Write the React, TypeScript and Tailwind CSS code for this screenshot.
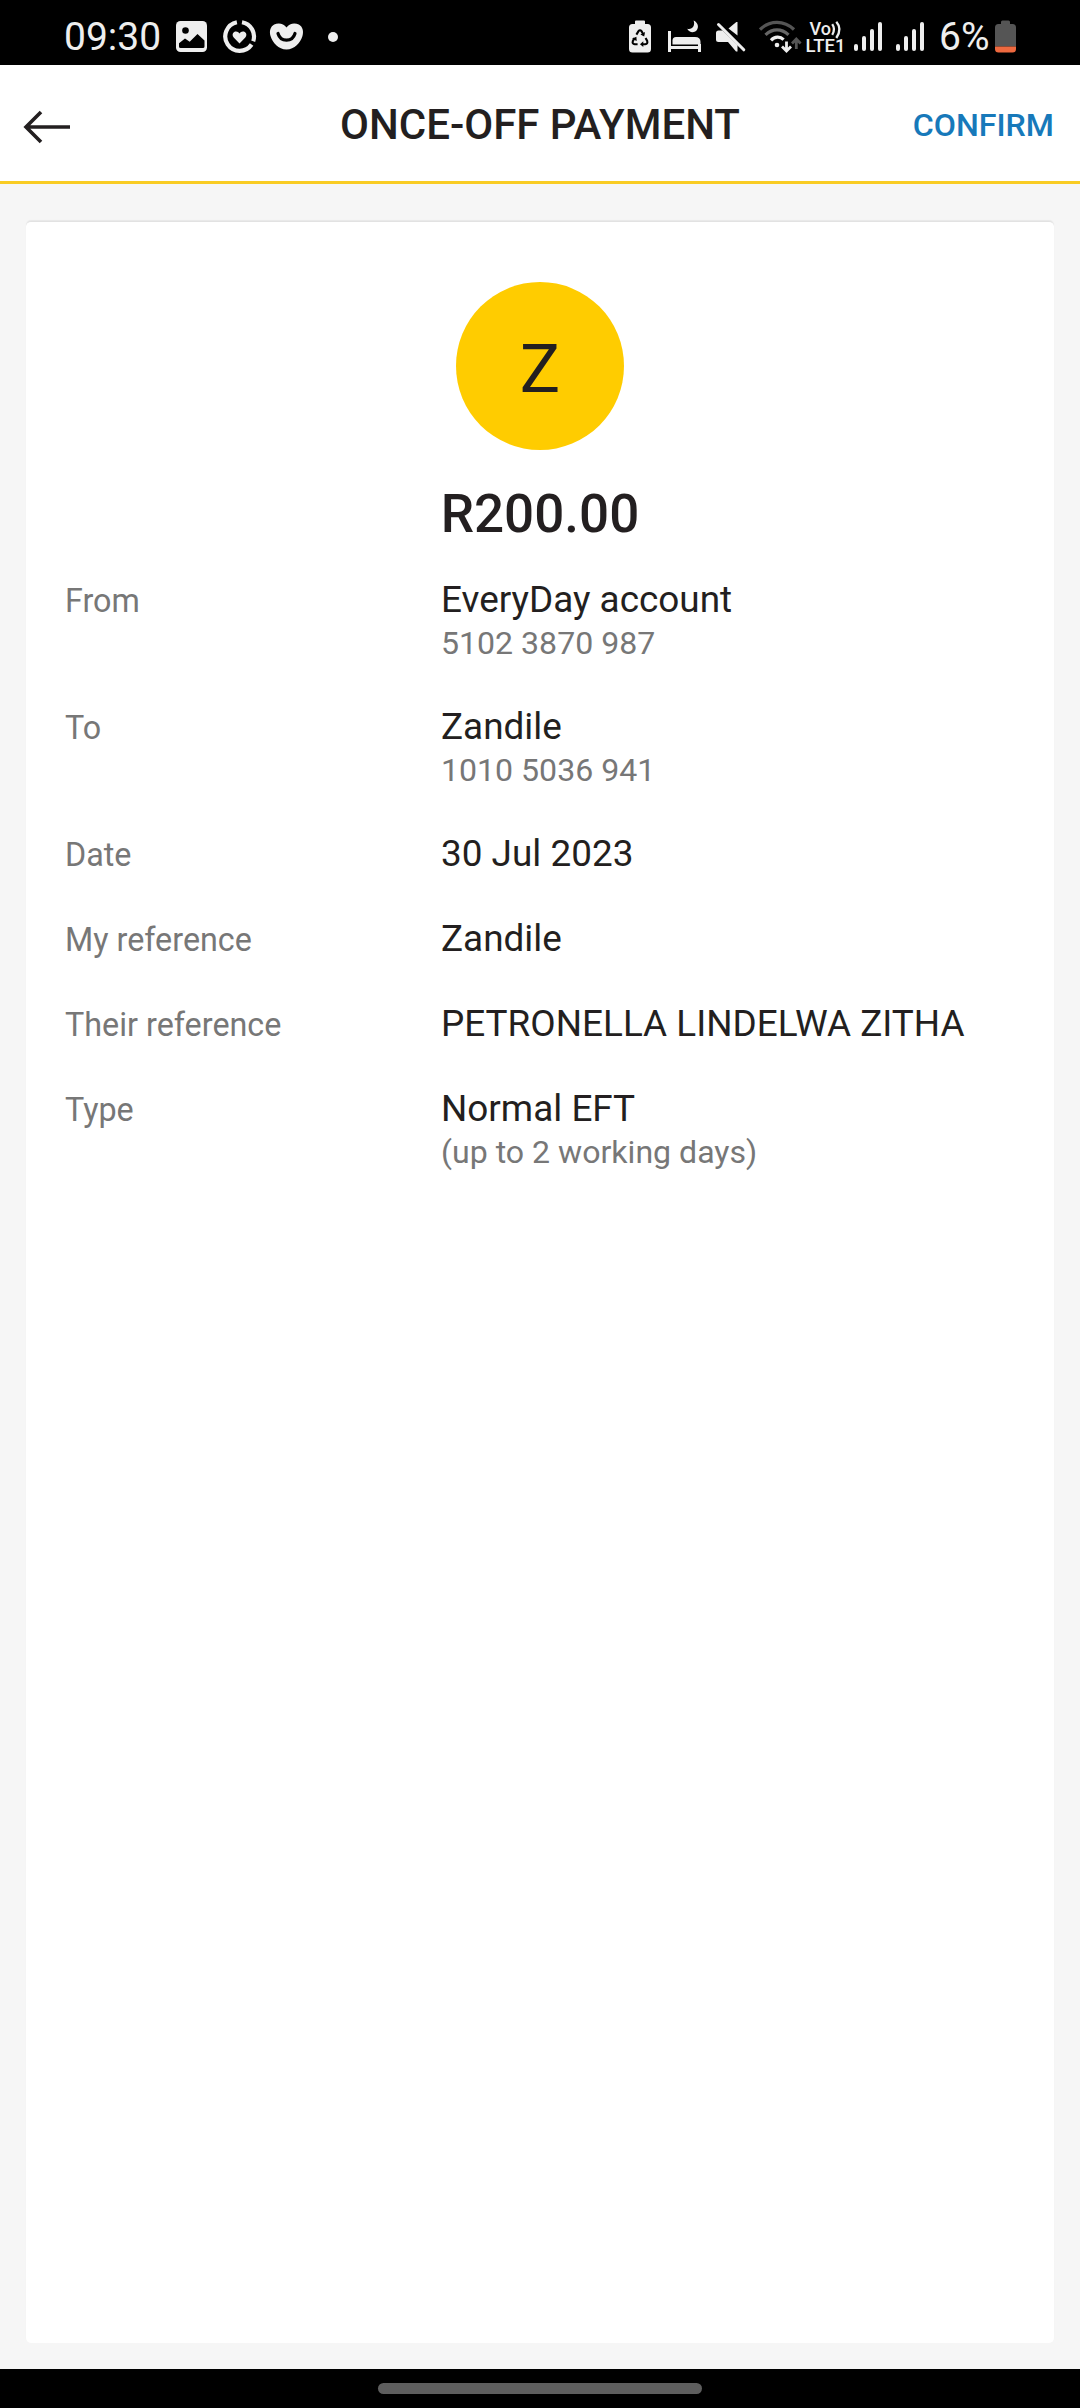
import React from "react";

type Detail = { label: string; value: string; note?: string };

const details: Detail[] = [
  { label: "From", value: "EveryDay account", note: "5102 3870 987" },
  { label: "To", value: "Zandile", note: "1010 5036 941" },
  { label: "Date", value: "30 Jul 2023" },
  { label: "My reference", value: "Zandile" },
  { label: "Their reference", value: "PETRONELLA LINDELWA ZITHA" },
  { label: "Type", value: "Normal EFT", note: "(up to 2 working days)" },
];

function ImageIcon() {
  return (
    <svg className="ml-[16px] h-[33px] w-[33px]" viewBox="0 0 33 33">
      <rect x="1" y="1" width="31" height="31" rx="4.5" fill="#eeeeee" />
      <circle cx="10.5" cy="10.5" r="3.3" fill="#000" />
      <path d="M4 23.3 10 18.5 14.7 21.8 22.5 14 29.5 20.5V26.4Q29.5 28 27.9 28H5.6Q4 28 4 26.4Z" fill="#000" />
    </svg>
  );
}

function HealthRingIcon() {
  return (
    <svg className="ml-[14px] h-[35px] w-[35px]" viewBox="0 0 35 35" fill="none">
      <path d="M14.9 3.3A14.4 14.4 0 1 0 29.6 25.5" stroke="#eeeeee" strokeWidth="4.2" />
      <path d="M20 3.3A14.4 14.4 0 0 1 31.2 22.2" stroke="#eeeeee" strokeWidth="4.2" />
      <path d="M17.5 24.5 11.7 18.4C10 16.5 10.4 14 12.2 13C14 12 16.4 12.6 17.5 14.5C18.6 12.6 21 12 22.8 13C24.6 14 25 16.5 23.3 18.4Z" fill="#eeeeee" />
    </svg>
  );
}

function HeartFaceIcon() {
  return (
    <svg className="ml-[12px] h-[29px] w-[35px]" viewBox="0 0 35 29" fill="none">
      <path d="M17.5 5.5C14.5 1 9 .5 5.2 2.5C1.2 4.7 0 9.5 1.7 14.5C3.5 20.5 9.5 27.5 17.5 27.5S31.5 20.5 33.3 14.5C35 9.5 33.8 4.7 29.8 2.5C26 .5 20.5 1 17.5 5.5Z" fill="#eeeeee" />
      <path d="M9 11.5C10.2 15.5 13.3 18.2 17.5 18.2S24.8 15.5 26 11.5" stroke="#000" strokeWidth="3.2" strokeLinecap="round" />
    </svg>
  );
}

function BatterySaverIcon() {
  return (
    <svg className="h-[33px] w-[24px]" viewBox="0 0 24 33" fill="none">
      <path d="M7 1.5Q7 .5 8 .5H16Q17 .5 17 1.5V4H19.5Q23 4 23 7.5V29Q23 32.5 19.5 32.5H4.5Q1 32.5 1 29V7.5Q1 4 4.5 4H7Z" fill="#eeeeee" />
      <path d="M8.4 14.6 10.5 11.2Q12 9.2 13.5 11.2L15.6 14.8M17.6 18 19.2 21Q20 23.9 17.3 24.2H14.6M9.6 24.2H6.7Q4 23.9 4.8 21.2L6.5 18" stroke="#000" strokeWidth="2.1" />
      <path d="M17 12 16.2 16.4 12.4 14.4ZM15.3 21.3V27L12 24.2ZM4 18.7 8.4 16.8 8.7 21.1Z" fill="#000" />
    </svg>
  );
}

function SleepIcon() {
  return (
    <svg className="ml-[15px] h-[33px] w-[34px]" viewBox="0 0 34 33" fill="none">
      <path d="M1 11H4V26H31V24H34V32H31V29H4V32H1Z" fill="#eeeeee" />
      <path d="M5.5 24.5V20.5Q5.5 17 9 17H28Q33.5 17 33.5 22V24.5Z" fill="#eeeeee" />
      <path d="M26.6 .6C31 2.5 32.3 7.5 29.5 10.5C26.8 13.3 22 12.500 20.2 8.8C25 10.2 28.5 5.8 26.600 .6Z" fill="#eeeeee" />
    </svg>
  );
}

function MutedIcon() {
  return (
    <svg className="ml-[14px] h-[33px] w-[32px]" viewBox="0 0 32 33" fill="none">
      <path d="M3.5 10.5H7.5L22.5 25V31.5H21L13 22H3.5Q1 22 1 19.5V13Q1 10.5 3.5 10.5Z" fill="#eeeeee" />
      <path d="M21.3 2H22.500V15.500L13.500 8.500Z" fill="#eeeeee" />
      <path d="M3.500 4.500 28.800 29.800" stroke="#eeeeee" strokeWidth="3" strokeLinecap="round" />
    </svg>
  );
}

function WifiIcon() {
  return (
    <svg className="ml-[12px] h-[33px] w-[43px]" viewBox="0 0 43 33" fill="none">
      <path d="M1 9.5C11 0 25 0 35 9.5" stroke="#555555" strokeWidth="3.2" />
      <path d="M6.5 14.8C13.5 8.2 22.5 8.2 29.5 14.8" stroke="#666666" strokeWidth="3.2" />
      <path d="M12 20.3C15.8 16.3 21.2 16.3 24.6 19.6" stroke="#eeeeee" strokeWidth="3.2" />
      <circle cx="18" cy="25" r="2.3" fill="#eeeeee" />
      <path d="M27.5 21.5V30.5M23 26.5 27.5 31 32 26.5" stroke="#eeeeee" strokeWidth="2.8" />
      <path d="M37.3 29V20M33 23.5 37.3 19 41.6 23.5" stroke="#555555" strokeWidth="2.8" />
    </svg>
  );
}

function VolteIcon() {
  return (
    <svg className="ml-[2px] h-[38px] w-[44px]" viewBox="-2 -2 44 38" fill="none">
      <g fill="#eeeeee" fontFamily="Roboto" fontWeight="500">
        <text x="3.5" y="14.7" fontSize="17.5" textLength="21.5" lengthAdjust="spacingAndGlyphs">Vo</text>
        <text x="-.5" y="32" fontSize="17.5" textLength="40" lengthAdjust="spacingAndGlyphs">LTE1</text>
      </g>
      <path d="M26.2 4.2Q29.8 9.2 26.2 14.8M30.3 1.8Q36.600 9 30.300 18" stroke="#eeeeee" strokeWidth="2.300" />
    </svg>
  );
}

function SignalBars() {
  return (
    <div className="flex h-[29px] w-[28px] items-end justify-between">
      <span className="h-[7px] w-[4px] rounded-full bg-[#eeeeee]" />
      <span className="h-[15px] w-[4px] rounded-full bg-[#eeeeee]" />
      <span className="h-[22px] w-[4px] rounded-full bg-[#eeeeee]" />
      <span className="h-[29px] w-[4px] rounded-full bg-[#eeeeee]" />
    </div>
  );
}

function BatteryIcon() {
  return (
    <svg className="ml-[6px] h-[33px] w-[21px]" viewBox="0 0 21 33">
      <path d="M6 2Q6 .5 7.5 .5H13.5Q15 .5 15 2V4H17.5Q21 4 21 7.5V26.5H0V7.5Q0 4 3.5 4H6Z" fill="#555555" />
      <path d="M0 26.5H21V29Q21 32.5 17.5 32.5H3.5Q0 32.5 0 29Z" fill="#ee693f" />
    </svg>
  );
}

function StatusBar() {
  return (
    <div className="flex h-[65px] items-center justify-between bg-black pt-2 pr-[64px] pl-[64px] text-[39px] leading-[45px] text-[#eeeeee]">
      <div className="flex items-center">
        <span className="w-[95px] pt-[2px]">09:30</span>
        <ImageIcon />
        <HealthRingIcon />
        <HeartFaceIcon />
        <span className="ml-[24px] h-[10px] w-[10px] rounded-full bg-[#eeeeee]" />
      </div>
      <div className="flex items-center">
        <BatterySaverIcon />
        <SleepIcon />
        <MutedIcon />
        <WifiIcon />
        <VolteIcon />
        <div className="ml-[6px] flex gap-[14px]">
          <SignalBars />
          <SignalBars />
        </div>
        <span className="ml-[15px] w-[50px] pt-[2px]">6%</span>
        <BatteryIcon />
      </div>
    </div>
  );
}

function Header() {
  return (
    <header className="grid h-[119px] grid-cols-[1fr_auto_1fr] items-center border-b-[3px] border-[#f9cc23] bg-white px-[23px] pt-[3px]">
      <button aria-label="Back" className="justify-self-start pt-[4px]">
        <svg className="h-[36px] w-[48px]" viewBox="0 0 48 36" fill="none" stroke="#231f20" strokeWidth="3.6">
          <path d="M47 18H3M18 3 3 18 18 33" />
        </svg>
      </button>
      <h1 className="text-[42px] leading-[50px] font-medium">ONCE-OFF PAYMENT</h1>
      <button className="mr-[3px] justify-self-end text-[32.2px] leading-[40px] font-medium text-[#1779ba]">CONFIRM</button>
    </header>
  );
}

function DetailRow({ label, value, note }: Detail) {
  return (
    <div className={note ? "flex h-[127px] items-baseline" : "flex h-[85px] items-baseline"}>
      <dt className="w-[377px] pl-[1px] text-[32.3px] leading-[43px] text-[#777777]">{label}</dt>
      <dd>
        <p className="text-[36.9px] leading-[43px]">{value}</p>
        {note && <p className="text-[32.1px] leading-[44px] text-[#777777]">{note}</p>}
      </dd>
    </div>
  );
}

export default function App() {
  return (
    <div className="flex h-[2408px] w-[1080px] flex-col bg-[#f6f6f6] font-['Roboto',sans-serif] text-[#231f20]">
      <StatusBar />
      <Header />
      <main className="flex flex-1 px-[26px] pt-[37px] pb-[26px]">
        <section className="flex flex-1 flex-col rounded-[5px] border-t border-[#e2e2e2] bg-white px-[38px] pt-[60px] shadow-[0_-1px_1px_rgba(0,0,0,0.06)]">
          <div className="flex h-[168px] w-[168px] items-center justify-center self-center rounded-full bg-[#ffcc00] pt-[6px] text-[67.5px] leading-[80px]">
            Z
          </div>
          <p className="mt-[34px] self-center text-[53px] leading-[60px] font-medium">R200.00</p>
          <dl className="mt-[34px]">
            {details.map((d) => (
              <DetailRow key={d.label} {...d} />
            ))}
          </dl>
        </section>
      </main>
      <footer className="flex h-[39px] justify-center bg-black pt-[14px]">
        <div className="h-[11px] w-[324px] rounded-full bg-[#5e5e5e]" />
      </footer>
    </div>
  );
}
